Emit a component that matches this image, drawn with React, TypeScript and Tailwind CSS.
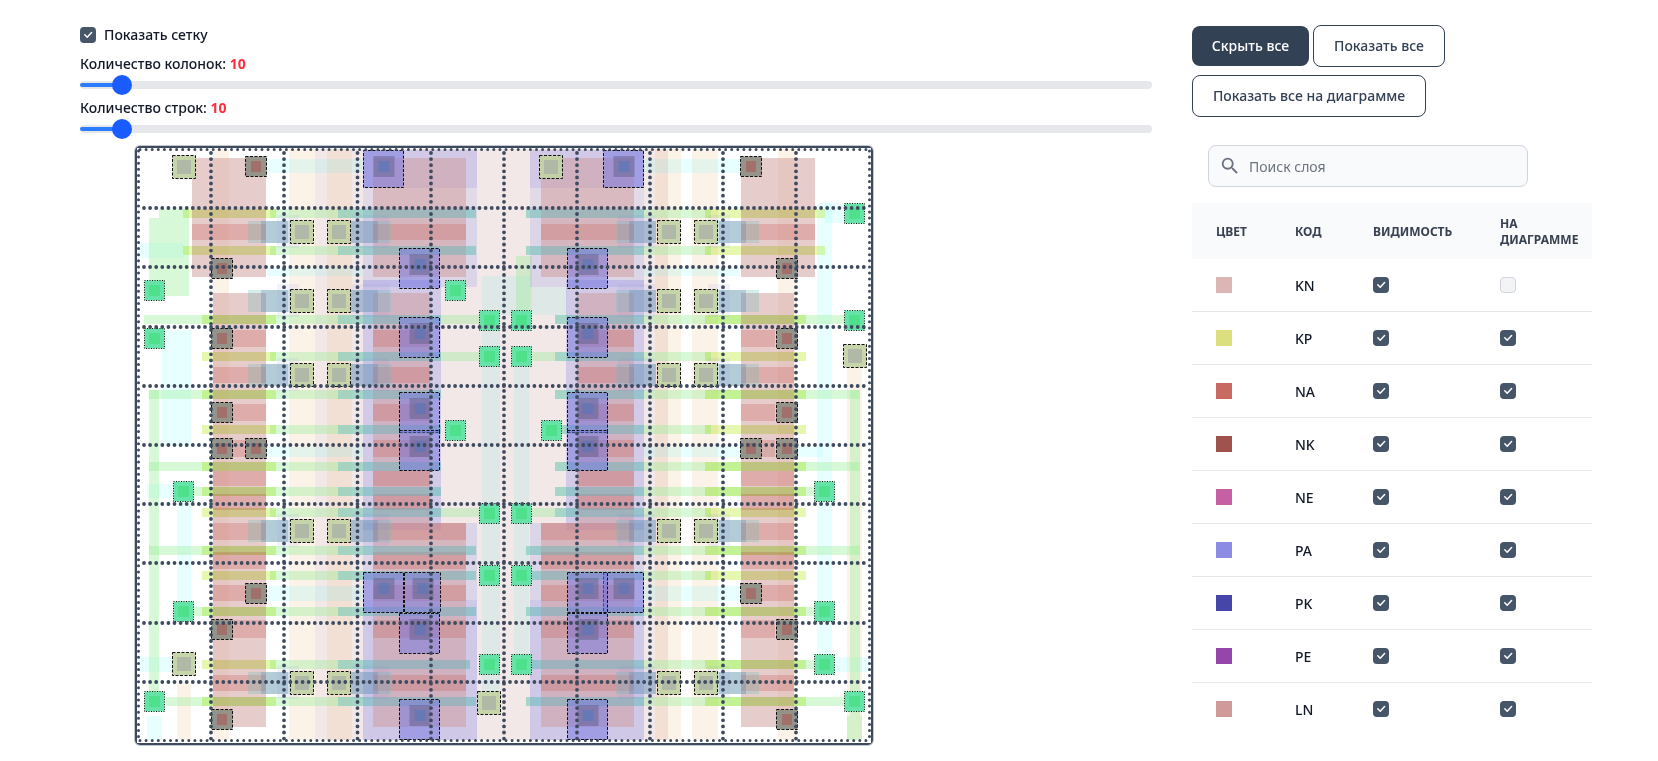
import { MdSearch } from "react-icons/md";

// слои таблицы
const layers = [
  { code: "KN", color: "#dcb5b5", diagram: false },
  { code: "KP", color: "#dbdf7d", diagram: true },
  { code: "NA", color: "#c96a62", diagram: true },
  { code: "NK", color: "#a0524f", diagram: true },
  { code: "NE", color: "#c75fa4", diagram: true },
  { code: "PA", color: "#8d8ce4", diagram: true },
  { code: "PK", color: "#4545aa", diagram: true },
  { code: "PE", color: "#9645aa", diagram: true },
  { code: "LN", color: "#d09a9a", diagram: true },
];

type R = [number, number, number, number];

// зеркало относительно центра схемы
const mir = (list: R[]): R[] => [...list, ...list.map(([x, y, w, h]): R => [1007 - x - w, y, w, h])];

const naRows: [number, number, number, number][] = [
  [224, 16, 192, 74],
  [330, 17, 232, 34],
  [367, 16, 213, 53],
  [404, 17, 232, 34],
  [440, 17, 232, 34],
  [471, 15, 213, 53],
  [494, 16, 213, 53],
  [523, 17, 213, 53],
  [552, 17, 213, 53],
  [585, 16, 213, 53],
  [620, 18, 232, 34],
  [675, 16, 213, 53],
];

const naRects = mir(
  naRows.flatMap(([y, h, x, w]): R[] => [
    [x, y, w, h],
    [373, y, y < 523 && y !== 224 ? 57 : 93, h],
  ]),
);

// y, левый зелёный старт, левый конец, правый старт, правый конец, конец бирюзы слева, начало справа, конец жёлтого
const strips = [
  { y: 209, gl: 270, le: 476, rs: 526, gr: 711, tl: 476, tr: 526, yl: 183, ye: 825 },
  { y: 246, gl: 270, le: 476, rs: 526, gr: 711, tl: 476, tr: 526, yl: 183, ye: 825 },
  { y: 315, gl: 144, le: 480, rs: 555, gr: 845, tl: 441, tr: 555, yl: 202, ye: 806 },
  { y: 352, gl: 270, le: 480, rs: 532, gr: 711, tl: 441, tr: 555, yl: 202, ye: 806 },
  { y: 390, gl: 149, le: 441, rs: 555, gr: 860, tl: 441, tr: 555, yl: 202, ye: 806 },
  { y: 425, gl: 270, le: 441, rs: 555, gr: 711, tl: 441, tr: 555, yl: 202, ye: 806 },
  { y: 462, gl: 149, le: 441, rs: 555, gr: 860, tl: 441, tr: 555, yl: 202, ye: 806 },
  { y: 487, gl: 193, le: 441, rs: 555, gr: 814, tl: 441, tr: 555, yl: 202, ye: 806 },
  { y: 508, gl: 270, le: 480, rs: 532, gr: 711, tl: 441, tr: 555, yl: 202, ye: 806 },
  { y: 546, gl: 149, le: 476, rs: 526, gr: 860, tl: 476, tr: 526, yl: 202, ye: 806 },
  { y: 571, gl: 270, le: 476, rs: 532, gr: 711, tl: 476, tr: 532, yl: 202, ye: 806 },
  { y: 607, gl: 193, le: 476, rs: 526, gr: 814, tl: 476, tr: 526, yl: 202, ye: 806 },
  { y: 660, gl: 270, le: 470, rs: 532, gr: 814, tl: 470, tr: 532, yl: 202, ye: 806 },
  { y: 697, gl: 166, le: 476, rs: 526, gr: 845, tl: 476, tr: 526, yl: 202, ye: 806 },
];

const polyRows = [220, 289, 363, 519, 671];

const greenPads = [
  [144, 280], [445, 280], [479, 310], [144, 328], [479, 346], [445, 420],
  [173, 481], [479, 503], [479, 565], [173, 601], [479, 654], [144, 691],
  [844, 203], [511, 310], [844, 310], [511, 346], [541, 420], [814, 481],
  [511, 503], [511, 565], [814, 601], [511, 654], [814, 654], [844, 691],
];

const olivePads = [
  [172, 155], [539, 155], [172, 652], [843, 344], [477, 691],
  ...polyRows.flatMap((y) => [[290, y], [327, y], [657, y], [694, y]]),
];

const greyPads = [
  [245, 156], [740, 156], [245, 583], [740, 583],
  [245, 438], [740, 438],
  ...[258, 328, 402, 438, 619, 709].flatMap((y) => [[211, y], [776, y]]),
];

// x, y, ширина, высота
const bluePads: R[] = [
  [363, 150, 41, 38], [603, 150, 41, 38],
  [363, 572, 41, 41], [603, 572, 41, 41], [404, 572, 37, 41], [567, 572, 41, 41],
  ...[248, 317, 392, 430, 613, 699].flatMap((y): R[] => [[399, y, 41, 41], [567, y, 41, 41]]),
];

const gridX = [211, 284, 357.5, 431, 504, 577, 650, 723, 796];
const gridY = [208, 267, 327, 386, 445, 504, 563, 623, 682];

function Rects({ list, fill, opacity }: { list: R[]; fill: string; opacity: number }) {
  return (
    <>
      {list.map(([x, y, w, h], i) => (
        <rect key={i} x={x} y={y} width={w} height={h} fill={fill} fillOpacity={opacity} />
      ))}
    </>
  );
}

function Diagram() {
  return (
    <svg viewBox="137 148 734 595" className="block h-[595px] w-[734px]">
      <rect x="137" y="148" width="734" height="595" fill="#fff" />

      {/* бледные колонки */}
      <Rects list={[[315, 149, 353, 591]]} fill="#d7b2b2" opacity={0.3} />
      <Rects list={[[213, 149, 16, 591], [289, 149, 26, 591], [327, 149, 25, 591], [655, 149, 26, 591], [692, 149, 26, 591], [778, 149, 17, 591], [847, 367, 15, 373], [177, 683, 14, 57]]} fill="#f0c38c" opacity={0.2} />
      <Rects
        list={[
          [267, 159, 96, 14], [644, 159, 96, 14], [267, 268, 96, 8], [644, 268, 96, 8], [267, 447, 96, 10], [644, 447, 178, 10],
          [267, 586, 96, 15], [644, 586, 96, 15], [139, 243, 44, 15], [817, 203, 15, 457], [162, 330, 29, 115], [177, 487, 14, 133],
          [147, 716, 15, 24], [139, 657, 34, 15], [147, 484, 26, 14], [825, 203, 20, 20], [835, 657, 34, 15],
        ]}
        fill="#00ffff"
        opacity={0.09}
      />
      <Rects list={[[482, 276, 48, 39], [532, 287, 35, 28], [482, 325, 18, 375], [514, 367, 15, 293]]} fill="#b0e8e0" opacity={0.3} />
      <Rects list={[[149, 218, 40, 78], [159, 209, 30, 9], [149, 390, 10, 317], [850, 390, 10, 326], [516, 256, 16, 54], [847, 716, 15, 24]]} fill="#90ee90" opacity={0.35} />

      {/* зелёная часть полос лежит под KN */}
      {strips.map((s) => (
        <Rects key={s.y} list={[[s.gl, s.y, s.le - s.gl, 9], [s.rs, s.y, s.gr - s.rs, 9]]} fill="#90ee90" opacity={0.35} />
      ))}

      {/* PA */}
      <Rects list={mir([[363, 207, 114, 80], [363, 523, 114, 217]])} fill="#8d8ce4" opacity={0.22} />
      <Rects list={mir([[363, 150, 114, 38], [363, 600, 114, 140]])} fill="#8d8ce4" opacity={0.16} />
      <Rects list={mir([[363, 150, 114, 38]])} fill="#8d8ce4" opacity={0.2} />
      <Rects list={mir([[363, 188, 114, 19]])} fill="#8d8ce4" opacity={0.15} />
      <Rects list={mir([[363, 280, 78, 250]])} fill="#8d8ce4" opacity={0.32} />

      {/* KN */}
      <Rects
        list={mir([
          [192, 158, 74, 119],
          [213, 293, 53, 434],
          [373, 158, 93, 119],
          [373, 293, 57, 230],
          [373, 523, 93, 204],
        ])}
        fill="#d09a9a"
        opacity={0.5}
      />
      {/* NA */}
      <Rects list={naRects} fill="#c96a62" opacity={0.32} />

      {/* полосы */}
      {strips.map((s) => (
        <g key={s.y}>
          <Rects list={[[338, s.y, s.tl - 338, 9], [s.tr, s.y, 644 - s.tr, 9]]} fill="#5ab4c8" opacity={0.36} />
          <g className="mix-blend-multiply">
            <Rects list={[[s.yl, s.y, 276 - s.yl, 9], [705, s.y, s.ye - 705, 9]]} fill="#e6f8b0" opacity={1} />
          </g>
        </g>
      ))}

      {/* затворы */}
      {polyRows.map((y) => (
        <g key={y}>
          <Rects list={mir([[248, y + 1, 42, 22], [351, y + 1, 40, 22]])} fill="#70c0b8" opacity={0.3} />
          <Rects list={mir([[261, y + 1, 27, 22], [351, y + 1, 27, 22]])} fill="#5a6fa8" opacity={0.26} />
          <Rects list={mir([[277, y - 5, 22, 33], [352, y - 5, 37, 33]])} fill="#8d8ce4" opacity={0.1} />
        </g>
      ))}

      {/* контакты */}
      {greenPads.map(([x, y], i) => (
        <g key={i}>
          <rect x={x + 0.5} y={y + 0.5} width="20" height="20" fill="#66e3a8" stroke="#111" strokeWidth="1" strokeDasharray="1 1.5" />
          <rect x={x + 5} y={y + 5} width="11" height="11" fill="#4fe08c" />
        </g>
      ))}
      {olivePads.map(([x, y], i) => (
        <g key={i}>
          <rect x={x + 0.5} y={y + 0.5} width="23" height="23" fill="#c3d3a5" fillOpacity="0.95" stroke="#111" strokeWidth="1" strokeDasharray="3 1.5" />
          <rect x={x + 5} y={y + 5} width="14" height="14" fill="#b0b8a8" />
        </g>
      ))}
      {greyPads.map(([x, y], i) => (
        <g key={i}>
          <rect x={x + 0.5} y={y + 0.5} width="21" height="20" fill="#919288" fillOpacity="0.97" stroke="#111" strokeWidth="1" strokeDasharray="3 1.5" />
          <rect x={x + 6} y={y + 5} width="10" height="11" fill="#a1706a" />
        </g>
      ))}
      {bluePads.map(([x, y, w, h], i) => (
        <g key={i}>
          <rect x={x + 0.5} y={y + 0.5} width={w - 1} height={h - 1} fill="#7474e0" fillOpacity="0.5" stroke="#111" strokeWidth="1" strokeDasharray="3 1.5" />
          <rect x={x + w / 2 - 10} y={y + 6} width="21" height="21" fill="#5a5a80" fillOpacity="0.45" />
          <rect x={x + w / 2 - 5} y={y + 11} width="11" height="11" fill="#4f78c0" fillOpacity="0.5" />
        </g>
      ))}

      {/* сетка */}
      {gridX.map((x) => (
        <line key={x} x1={x} x2={x} y1="153" y2="740" stroke="#3e4a5e" strokeWidth="3.8" strokeLinecap="round" strokeDasharray="0 6.1" />
      ))}
      {gridY.map((y) => (
        <line key={y} y1={y} y2={y} x1="144" x2="869" stroke="#3e4a5e" strokeWidth="3.8" strokeLinecap="round" strokeDasharray="0 6.1" />
      ))}
      <line x1="138.5" x2="138.5" y1="151" y2="741" stroke="#3e4a5e" strokeWidth="3" strokeLinecap="round" strokeDasharray="0 6.1" />
      <line x1="869.5" x2="869.5" y1="151" y2="741" stroke="#3e4a5e" strokeWidth="3" strokeLinecap="round" strokeDasharray="0 6.1" />
      <line x1="140" x2="870" y1="149.5" y2="149.5" stroke="#3e4a5e" strokeWidth="3" strokeLinecap="round" strokeDasharray="0 6.1" />
      <line x1="140" x2="870" y1="740.5" y2="740.5" stroke="#3e4a5e" strokeWidth="3" strokeLinecap="round" strokeDasharray="0 6.1" />
    </svg>
  );
}

function CheckBox({ checked = true }: { checked?: boolean }) {
  if (!checked) {
    return <div className="h-4 w-4 rounded border border-[#d1d5db] bg-[#f3f4f6]" />;
  }
  return (
    <div className="flex h-4 w-4 items-center justify-center rounded bg-[#475569]">
      <svg viewBox="0 0 16 16" className="h-4 w-4" fill="none" stroke="#fff" strokeWidth="1.5" strokeLinecap="round" strokeLinejoin="round">
        <path d="M4.8 7.8 7.2 10.2 11.6 5.6" />
      </svg>
    </div>
  );
}

function RangeRow({ label }: { label: string }) {
  return (
    <div className="w-[1072px]">
      <div className="text-sm leading-5 font-medium text-[#111827]">
        {label}: <span className="font-bold text-[#ff2d3d]">10</span>
      </div>
      <div className="relative mt-[7px] h-2 rounded-lg bg-[#e5e7eb]">
        <div className="absolute top-[2px] left-0 h-1 w-[40px] rounded-l bg-[#2b7cff]" />
        <div className="absolute top-[-6px] left-[32px] h-5 w-5 rounded-full bg-[#1a5cff]" />
      </div>
    </div>
  );
}

export default function App() {
  return (
    <div className="flex h-[761px] overflow-hidden bg-white pl-[80px] font-['Noto_Sans',sans-serif] text-[#111827]">
      <div className="w-[1072px] pt-[27px]">
        <div className="flex items-center gap-2">
          <CheckBox />
          <span className="text-sm leading-4 font-medium">Показать сетку</span>
        </div>
        <div className="mt-[11px]">
          <RangeRow label="Количество колонок" />
        </div>
        <div className="mt-[9px]">
          <RangeRow label="Количество строк" />
        </div>
        <div className="mt-[13px] ml-[55px] w-[738px] rounded-[5px] border-2 border-[#3e4a5e] ring-1 ring-[#c4c9d1]">
          <Diagram />
        </div>
      </div>

      <div className="ml-[40px] w-[400px] pt-[25px]">
        <div className="flex flex-wrap gap-x-[4px] gap-y-2">
          <button className="my-px h-10 w-[117px] rounded-lg bg-[#334155] text-sm font-medium text-white">Скрыть все</button>
          <button className="h-[42px] w-[132px] rounded-lg border border-[#334155] bg-white text-sm font-medium text-[#334155]">Показать все</button>
          <button className="h-[42px] w-[234px] rounded-lg border border-[#334155] bg-white text-sm font-medium text-[#334155]">Показать все на диаграмме</button>
        </div>

        <div className="mt-7 ml-4 flex h-[42px] w-[320px] items-center rounded-lg border border-[#d1d5db] bg-[#f9fafb] pl-[10px]">
          <MdSearch className="text-[#6b7280]" size={22} />
          <span className="mt-[2px] ml-2 text-sm text-[#6b7280]">Поиск слоя</span>
        </div>

        <table className="mt-4 w-[400px] table-fixed border-separate border-spacing-0 text-left">
          <thead>
            <tr className="h-[56px] bg-[#f9fafb] text-xs leading-4 font-bold text-[#374151] uppercase">
              <th className="w-[79px] pt-[2px] pl-6 font-bold">Цвет</th>
              <th className="w-[78px] pt-[2px] pl-[24px] font-bold">Код</th>
              <th className="w-[127px] pt-[2px] pl-[24px] font-bold">Видимость</th>
              <th className="w-[116px] pt-[2px] pl-[24px] font-bold">На диаграмме</th>
            </tr>
          </thead>
          <tbody>
            {layers.map((l, i) => {
              const line = i < layers.length - 1 ? "border-b border-[#e5e7eb]" : "border-b border-transparent";
              return (
                <tr key={l.code} className="h-[53px]">
                  <td className={`pl-6 ${line}`}>
                    <div className="h-4 w-4" style={{ backgroundColor: l.color }} />
                  </td>
                  <td className={`pt-[2px] pl-6 text-sm font-medium ${line}`}>{l.code}</td>
                  <td className={`pl-6 ${line}`}>
                    <CheckBox />
                  </td>
                  <td className={`pl-6 ${line}`}>
                    <CheckBox checked={l.diagram} />
                  </td>
                </tr>
              );
            })}
          </tbody>
        </table>
      </div>
    </div>
  );
}
